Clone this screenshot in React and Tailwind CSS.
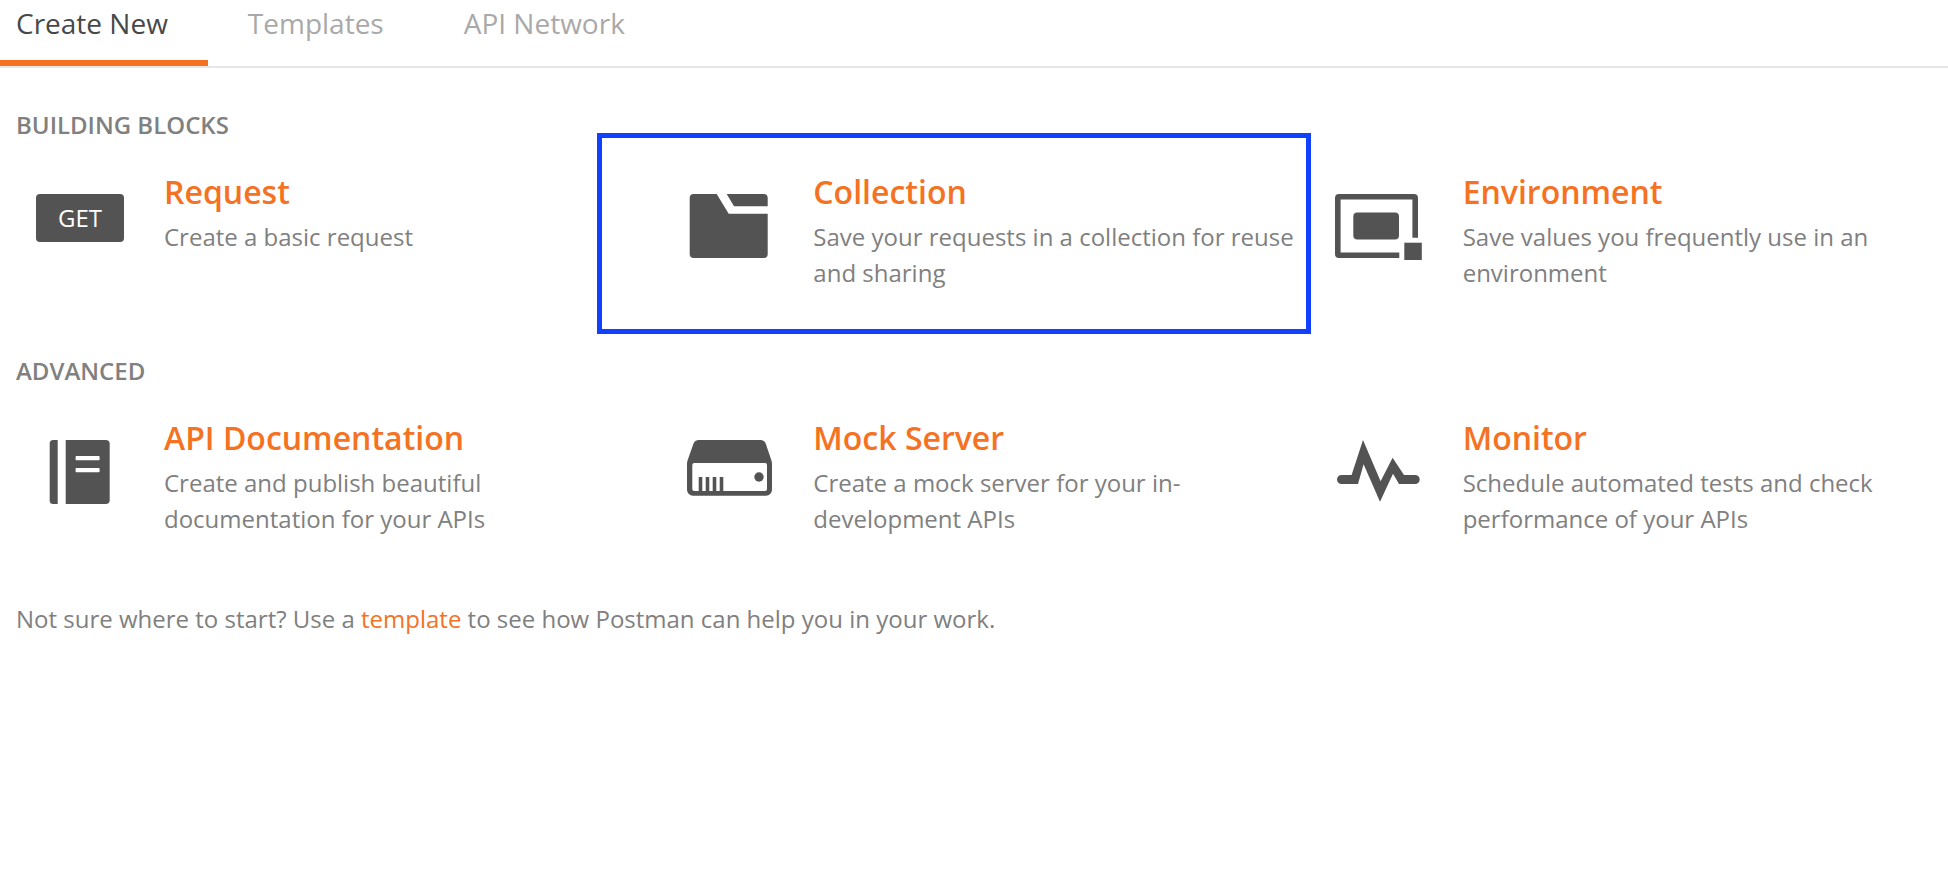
const tabs = ['Create New', 'Templates', 'API Network'];

function GetBadge() {
  return (
    <span className="flex h-12 w-[88px] items-center justify-center rounded-sm bg-[#535353] pb-px text-2xl font-medium text-white">
      GET
    </span>
  );
}

function Icon({ children }) {
  return (
    <svg width="88" height="68" viewBox="0 0 88 68" fill="#535353" aria-hidden="true">
      {children}
    </svg>
  );
}

function CollectionIcon() {
  return (
    <Icon>
      <path d="M8.700 0H31.700L43.700 19.700H82.700V60A4 4 0 0 1 78.700 64H8.700A4 4 0 0 1 4.700 60V4A4 4 0 0 1 8.700 0Z" />
      <path d="M41.700 0H78.700A4 4 0 0 1 82.700 4V12.300H49Z" />
    </Icon>
  );
}

function EnvironmentIcon() {
  return (
    <Icon>
      <path d="M4 0H79A4 4 0 0 1 83 4V43.700H77.400V5.600H5.600V58.400H64.300V64H4A4 4 0 0 1 0 60V4A4 4 0 0 1 4 0Z" />
      <rect x="18.300" y="18.500" width="45.700" height="27" rx="4" />
      <rect x="69.300" y="48.700" width="17.500" height="17.300" />
    </Icon>
  );
}

function DocumentationIcon() {
  return (
    <Icon>
      <path d="M21.700 0V64H17.200A3.500 3.500 0 0 1 13.700 60.500V3.500A3.500 3.500 0 0 1 17.200 0Z" />
      <path d="M29.700 0H69.700A4 4 0 0 1 73.700 4V60A4 4 0 0 1 69.700 64H29.700Z" />
      <rect x="39.600" y="16" width="24" height="4.300" rx="0.800" fill="#fff" />
      <rect x="39.600" y="28" width="24" height="4.300" rx="0.800" fill="#fff" />
    </Icon>
  );
}

function ServerIcon() {
  return (
    <Icon>
      <path d="M13 0H76Q79.500 0.500 80.500 3L86.300 20Q87 22 87 24V49.700A6 6 0 0 1 81 55.700H8A6 6 0 0 1 2 49.700V24Q2 22 2.700 20L8.700 3Q9.700 0.500 13 0Z" />
      <rect x="7.300" y="23" width="74.700" height="28" rx="2" fill="#fff" />
      <path d="M13.700 37H17.300V51H13.700ZM20.700 37H24.300V51H20.700ZM27.700 37H31.300V51H27.700ZM34.700 37H38.300V51H34.700Z" />
      <circle cx="74" cy="37" r="4.700" />
    </Icon>
  );
}

function MonitorIcon() {
  return (
    <Icon>
      <path d="M6.500 35H16.600L28 0L45.600 41.200L57.600 17.700L69 35H80.200A4.500 4.500 0 0 1 80.200 44H64L58 33.700L45 61.700L28.600 24.300L23 44H6.500A4.500 4.500 0 0 1 6.500 35Z" />
    </Icon>
  );
}

const blocks = [
  { title: 'Request', text: 'Create a basic request', icon: GetBadge },
  { title: 'Collection', text: 'Save your requests in a collection for reuse and sharing', icon: CollectionIcon, marked: true },
  { title: 'Environment', text: 'Save values you frequently use in an environment', icon: EnvironmentIcon },
];
const advanced = [
  { title: 'API Documentation', text: 'Create and publish beautiful documentation for your APIs', icon: DocumentationIcon },
  { title: 'Mock Server', text: 'Create a mock server for your in-development APIs', icon: ServerIcon },
  { title: 'Monitor', text: 'Schedule automated tests and check performance of your APIs', icon: MonitorIcon },
];

function Card({ title, text, icon: Picture, marked }) {
  return (
    <button type="button" className="relative ml-4 flex items-start text-left">
      {marked && <span className="absolute -top-9 -right-3 -bottom-[43px] -left-[68px] border-5 border-[#1240ff]" />}
      <span className="flex w-32 shrink-0 justify-center pt-[25px]">
        <Picture />
      </span>
      <span className="ml-5 flex flex-col">
        <span className="text-[32px] leading-[46px] font-semibold text-[#f57223]">{title}</span>
        <span className="mt-1 text-2xl leading-9 text-[#808080]">{text}</span>
      </span>
    </button>
  );
}

function Section({ heading, cards }) {
  return (
    <section className="mb-16">
      <h2 className="px-4 text-2xl leading-8 font-semibold text-[#808080]">{heading}</h2>
      <div className="mt-7 grid grid-cols-3">
        {cards.map((c) => <Card key={c.title} {...c} />)}
      </div>
    </section>
  );
}

export default function App() {
  return (
    <div className="min-h-screen bg-white font-['Open_Sans',sans-serif]">
      <nav className="flex border-b-2 border-[#e6e6e6]">
        {tabs.map((t, i) => (
          <button
            key={t}
            type="button"
            className={`border-b-6 pt-[3px] pr-10 pb-[17px] text-[28px] leading-10 ${i === 0 ? 'border-[#f57223] pl-4 text-[#484848]' : 'border-transparent pl-10 text-[#a9a9a9]'}`}
          >
            {t}
          </button>
        ))}
      </nav>
      <main className="pt-[41px]">
        <Section heading="BUILDING BLOCKS" cards={blocks} />
        <Section heading="ADVANCED" cards={advanced} />
        <p className="px-4 text-2xl leading-9 text-[#808080]">
          Not sure where to start? Use a <a href="#templates" className="text-[#f57223]">template</a> to see how Postman can help you in your work.
        </p>
      </main>
    </div>
  );
}
